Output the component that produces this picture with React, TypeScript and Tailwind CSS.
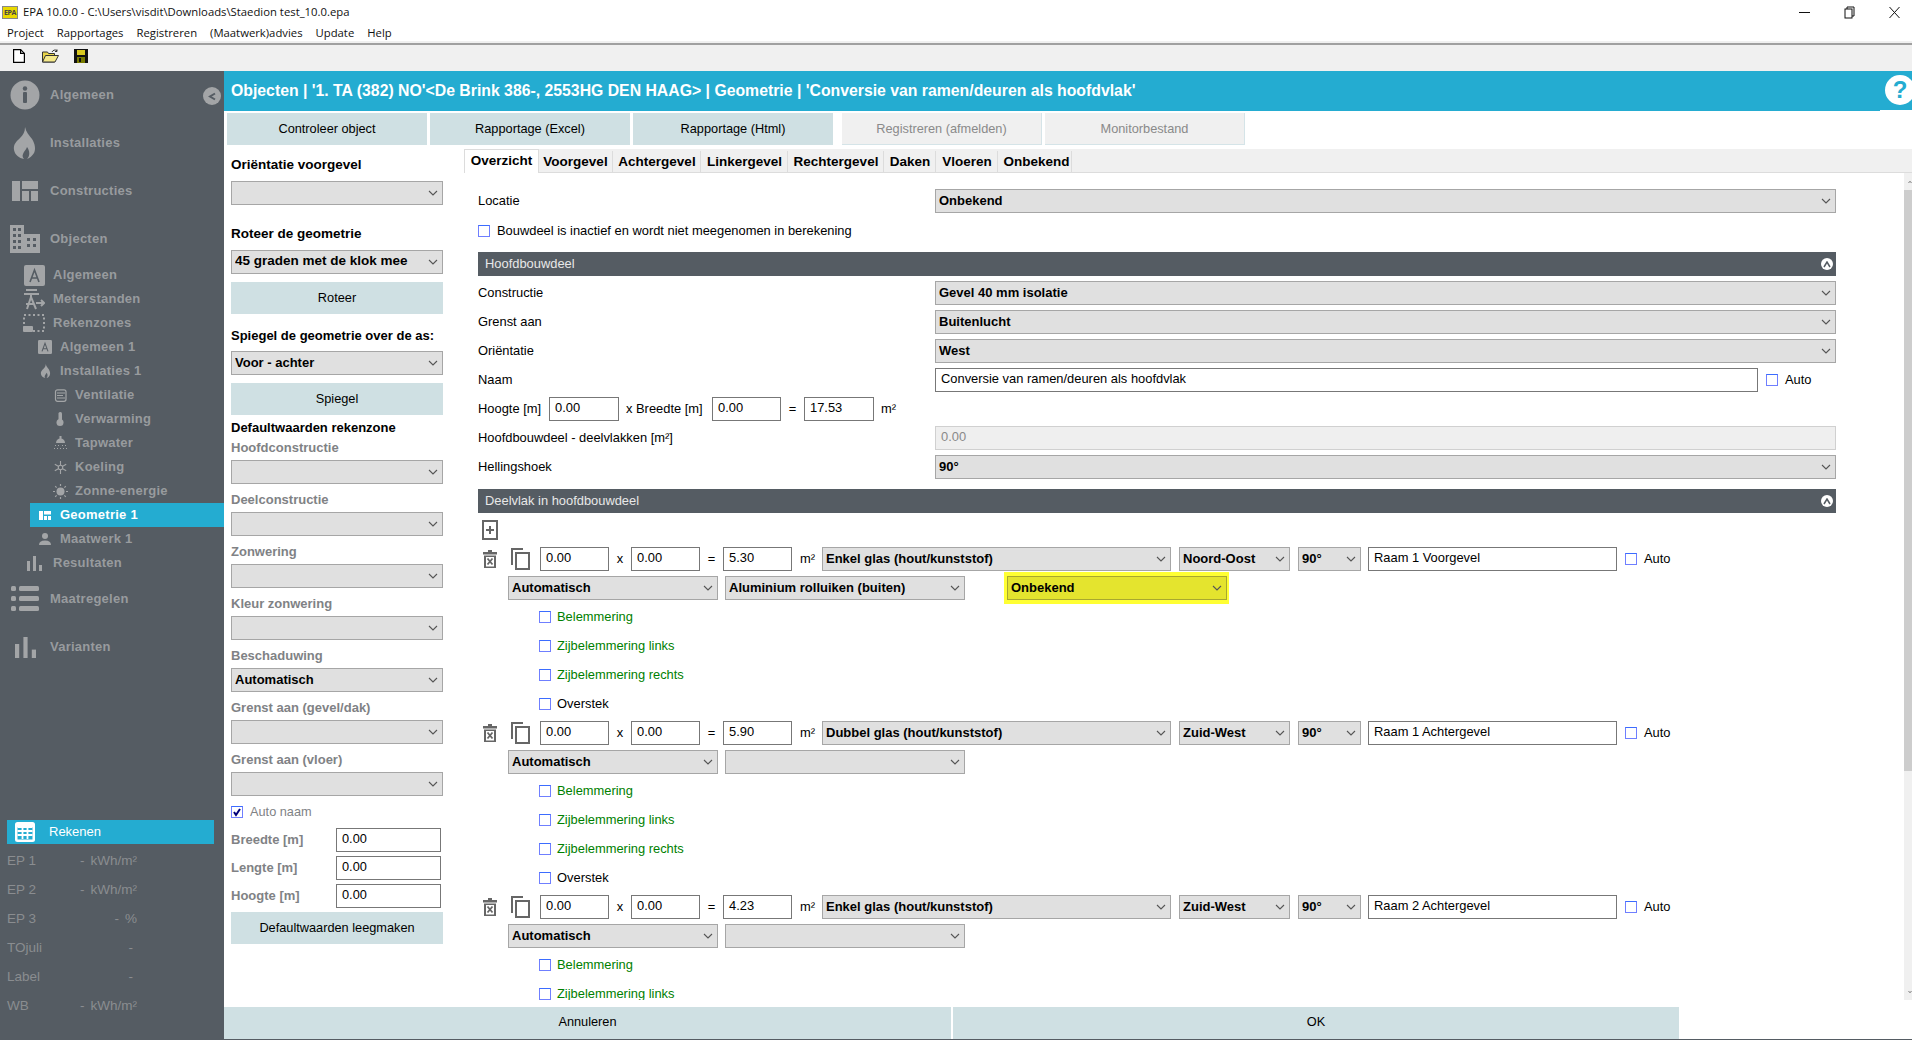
import React from "react";

const Chevron = () => (
  <svg width="10" height="6" viewBox="0 0 10 6" className="shrink-0" fill="none" stroke="#555" strokeWidth="1.1">
    <path d="M1 1l4 4 4-4" />
  </svg>
);

function Select({ className = "", text = "", bg = "bg-[#e0e0e0]", big = false }: { className?: string; text?: string; bg?: string; big?: boolean }) {
  return (
    <div className={`h-6 shrink-0 flex items-center pl-[3px] pr-[4px] border border-[#a6a6a6] ${bg} ${className}`}>
      <span className={`flex-1 truncate font-bold text-black pb-[2px] ${big ? "text-[13.5px]" : "text-[13px]"}`}>{text}</span>
      <Chevron />
    </div>
  );
}

function Input({ className = "", text = "" }: { className?: string; text?: string }) {
  return (
    <div className={`h-6 shrink-0 flex items-center pl-[5px] pb-[2px] bg-white border border-[#777] text-black ${className}`}>{text}</div>
  );
}

function Check({ checked = false }: { checked?: boolean }) {
  return (
    <span className="w-3 h-3 shrink-0 bg-white border border-[#6f7fff] border-t-[#3b6cff] flex items-center justify-center">
      {checked && (
        <svg width="10" height="10" viewBox="0 0 10 10" fill="none" stroke="#00007a" strokeWidth="2">
          <path d="M2 5l2 3 4-6" />
        </svg>
      )}
    </span>
  );
}

const TopBtn = ({ text, disabled, className = "" }: { text: string; disabled?: boolean; className?: string }) => (
  <div
    className={`w-[200px] h-8 flex items-center justify-center ${
      disabled ? "bg-[#f0f0f0] text-[#8a8a8a] border-r border-b border-[#d5e4e8] pt-[1px]" : "bg-[#cfe0e3] text-black"
    } ${className}`}
  >
    {text}
  </div>
);

const G = "#a3a5a7";
const IInfo = () => (
  <svg width="30" height="30" viewBox="0 0 30 30">
    <circle cx="15" cy="15" r="14.5" fill={G} />
    <rect x="13" y="12" width="4" height="11" rx="1" fill="#555c63" />
    <circle cx="15" cy="8.5" r="2.2" fill="#555c63" />
  </svg>
);
const IFlame = ({ s = 32 }: { s?: number }) => (
  <svg width={s * 0.72} height={s} viewBox="0 0 23 32">
    <path d="M12 0c1 5 4 8 7 12 3 5 4 10 2 14-2 3-4 5-7 6 3-3 3-8 0-12-1 3-3 4-4 7-1 2 0 4 1 5-5-1-9-4-10-9-1-6 3-9 6-12 3-3 5-6 5-11z" fill={G} />
  </svg>
);
const ILayout = () => (
  <svg width="26" height="20" viewBox="0 0 26 20" fill={G}>
    <rect x="0" y="0" width="8" height="20" />
    <rect x="10" y="0" width="16" height="8" />
    <rect x="10" y="10" width="7" height="10" />
    <rect x="19" y="10" width="7" height="10" />
  </svg>
);
const IBuilding = () => (
  <svg width="30" height="28" viewBox="0 0 30 28">
    <path fillRule="evenodd" fill={G} d="M0 0h14v9h16v19H0zM3 3v3h3V3zM8 3v3h3V3zM3 9v3h3V9zM8 9v3h3V9zM3 15v3h3v-3zM8 15v3h3v-3zM3 21v3h3v-3zM8 21v3h3v-3zM17 13v3h3v-3zM23 13v3h3v-3zM17 19v3h3v-3zM23 19v3h3v-3z" />
  </svg>
);
const IA = ({ s = 21 }: { s?: number }) => (
  <svg width={s} height={s} viewBox="0 0 21 21">
    <rect width="21" height="21" rx="2" fill={G} />
    <path d="M6 17l4.5-12 4.5 12M7.500 13h6" fill="none" stroke="#555c63" strokeWidth="1.6" />
  </svg>
);
const ITower = () => (
  <svg width="22" height="22" viewBox="0 0 22 22" fill="none" stroke={G} strokeWidth="2">
    <path d="M3 2h11M1 6h15M8 6v3M4 21l4-12 5 12M3 16h8" />
    <path d="M13 15h8M18 12l3 3-3 3" />
  </svg>
);
const IDashed = () => (
  <svg width="22" height="18" viewBox="0 0 22 18" fill="none">
    <rect x="1" y="1" width="20" height="16" stroke={G} strokeWidth="2" strokeDasharray="2 2.500" />
    <rect x="0" y="12" width="10" height="6" rx="1" fill={G} />
  </svg>
);
const IDrop = () => (
  <svg width="11" height="14" viewBox="0 0 23 32">
    <path d="M12 0c1 5 4 8 7 12 3 5 4 10 2 14-2 3-4 5-7 6 3-3 3-8 0-12-1 3-3 4-4 7-1 2 0 4 1 5-5-1-9-4-10-9-1-6 3-9 6-12 3-3 5-6 5-11z" fill={G} />
  </svg>
);
const IVent = () => (
  <svg width="13" height="13" viewBox="0 0 13 13" fill="none" stroke={G} strokeWidth="1.200">
    <rect x="1.500" y="0.800" width="10.500" height="11.500" rx="2" />
    <path d="M3 4h8M3 6.500h6M3 9h8" />
  </svg>
);
const ITherm = () => (
  <svg width="8" height="14" viewBox="0 0 8 14" fill={G}>
    <rect x="2.500" y="0" width="3.500" height="9" rx="1.500" />
    <circle cx="4" cy="10.500" r="3.500" />
  </svg>
);
const IShower = () => (
  <svg width="13" height="14" viewBox="0 0 13 14" fill={G}>
    <rect x="5.500" y="0" width="2" height="3" />
    <path d="M2 7c0-3 2-4.500 4.500-4.500S11 4 11 7z" />
    <path d="M1 9h1v1H1zM4 9h1v1H4zM8 9h1v1H8zM11 9h1v1h-1zM0 12h1v1H0zM3 12h1v1H3zM6 12h1v1H6zM9 12h1v1H9zM12 12h1v1h-1z" />
  </svg>
);
const ISnow = () => (
  <svg width="13" height="13" viewBox="0 0 13 13" fill="none" stroke={G} strokeWidth="1.100">
    <path d="M6.500 0v13M.8 3.200l11.400 6.600M.8 9.800l11.400-6.600" />
    <circle cx="6.500" cy="6.500" r="2.200" fill="#555c63" />
  </svg>
);
const ISun = () => (
  <svg width="15" height="15" viewBox="0 0 15 15" fill={G}>
    <circle cx="7.500" cy="7.500" r="4" />
    <g stroke={G} strokeWidth="1.200">
      <path d="M7.500 0v2M7.500 13v2M0 7.500h2M13 7.500h2M2.200 2.200l1.400 1.400M11.400 11.400l1.400 1.400M2.200 12.800l1.400-1.400M11.400 3.600l1.400-1.400" />
    </g>
  </svg>
);
const IPerson = () => (
  <svg width="12" height="12" viewBox="0 0 12 12" fill={G}>
    <circle cx="6" cy="3" r="3" />
    <path d="M0 12c0-3 2-4.500 6-4.500s6 1.500 6 4.500z" />
  </svg>
);
const IBars = ({ w = 15, h = 15 }: { w?: number; h?: number }) => (
  <svg width={w} height={h} viewBox="0 0 15 15" fill={G}>
    <rect x="0" y="5" width="3" height="10" />
    <rect x="6" y="0" width="3" height="15" />
    <rect x="12" y="9" width="3" height="6" />
  </svg>
);
const IList = () => (
  <svg width="28" height="26" viewBox="0 0 28 26" fill={G}>
    <rect x="0" y="0" width="5" height="5" rx="1.500" />
    <rect x="8" y="0" width="20" height="5" rx="1.500" />
    <rect x="0" y="10" width="5" height="5" rx="1.500" />
    <rect x="8" y="10" width="20" height="5" rx="1.500" />
    <rect x="0" y="20" width="5" height="5" rx="1.500" />
    <rect x="8" y="20" width="20" height="5" rx="1.500" />
  </svg>
);
const IGeo = () => (
  <svg width="12" height="9" viewBox="0 0 12 9" fill="#fff">
    <rect x="0" y="0" width="4" height="9" />
    <rect x="5" y="0" width="7" height="3.500" />
    <rect x="5" y="5" width="3" height="4" />
    <rect x="9" y="5" width="3" height="4" />
  </svg>
);

const sideText = "font-['Liberation_Sans',sans-serif] font-bold tracking-[0.25px] text-[13px] text-[#989b9e]";

const Main = ({ icon, text }: { icon: React.ReactNode; text: string }) => (
  <div className={`h-12 flex items-center ${sideText}`}>
    <span className="w-[50px] flex justify-center shrink-0">{icon}</span>
    <span className="pb-[1px]">{text}</span>
  </div>
);
const L1 = ({ icon, text }: { icon: React.ReactNode; text: string }) => (
  <div className={`h-6 flex items-center ${sideText}`}>
    <span className="w-[53px] pl-[15px] flex justify-center shrink-0">{icon}</span>
    <span className="pb-[1px]">{text}</span>
  </div>
);
const L2 = ({ icon, text }: { icon: React.ReactNode; text: string }) => (
  <div className={`h-6 flex items-center ${sideText}`}>
    <span className="w-[60px] pl-[30px] flex justify-center shrink-0">{icon}</span>
    <span className="pb-[1px]">{text}</span>
  </div>
);
const L3 = ({ icon, text }: { icon: React.ReactNode; text: string }) => (
  <div className={`h-6 flex items-center ${sideText}`}>
    <span className="w-[75px] pl-[45px] flex justify-center shrink-0">{icon}</span>
    <span className="pb-[1px]">{text}</span>
  </div>
);

const Ep = ({ label, unit }: { label: string; unit?: string }) => (
  <div className="h-[29px] pb-[1px] flex items-center justify-between w-[130px] ml-[7px] text-[#8a8d90] text-[13.5px]">
    <span>{label}</span>
    <span className={unit ? "" : "pr-[4px]"}>
      -{unit && <span className="ml-[6px]">{unit}</span>}
    </span>
  </div>
);

function Sidebar() {
  return (
    <div className="w-[224px] shrink-0 bg-[#555c63] flex flex-col relative">
      <Main icon={<IInfo />} text="Algemeen" />
      <Main icon={<IFlame />} text="Installaties" />
      <Main icon={<ILayout />} text="Constructies" />
      <Main icon={<IBuilding />} text="Objecten" />
      <L1 icon={<IA />} text="Algemeen" />
      <L1 icon={<ITower />} text="Meterstanden" />
      <L1 icon={<IDashed />} text="Rekenzones" />
      <L2 icon={<IA s={14} />} text="Algemeen 1" />
      <L2 icon={<IDrop />} text="Installaties 1" />
      <L3 icon={<IVent />} text="Ventilatie" />
      <L3 icon={<ITherm />} text="Verwarming" />
      <L3 icon={<IShower />} text="Tapwater" />
      <L3 icon={<ISnow />} text="Koeling" />
      <L3 icon={<ISun />} text="Zonne-energie" />
      <div className="h-6 ml-[30px] flex items-center bg-[#24acd1] font-['Liberation_Sans',sans-serif] font-bold tracking-[0.25px] text-[13px] text-white">
        <span className="w-[30px] flex justify-center shrink-0">
          <IGeo />
        </span>
        <span className="pb-[1px]">Geometrie 1</span>
      </div>
      <L2 icon={<IPerson />} text="Maatwerk 1" />
      <L1 icon={<IBars />} text="Resultaten" />
      <Main icon={<IList />} text="Maatregelen" />
      <Main icon={<IBars w={21} h={21} />} text="Varianten" />
      <div className="mt-[149px] ml-[7px] w-[207px] h-6 pb-[1px] bg-[#24acd1] flex items-center text-white text-[13px]">
        <span className="w-[42px] pl-[8px] pt-[1px] shrink-0">
          <svg width="20" height="20" viewBox="0 0 20 20">
            <rect x="0" y="0" width="20" height="20" rx="2.500" fill="#fff" />
            <path d="M2.500 5h15v12.500h-15z" fill="#24acd1" />
            <path d="M2.500 5h15M2.500 9h15M2.500 13h15M7.500 5v12M12.500 5v12" stroke="#fff" strokeWidth="1.800" />
          </svg>
        </span>
        Rekenen
      </div>
      <div className="mt-[3px]">
        <Ep label="EP 1" unit="kWh/m²" />
        <Ep label="EP 2" unit="kWh/m²" />
        <Ep label="EP 3" unit="%" />
        <Ep label="TOjuli" />
        <Ep label="Label" />
        <Ep label="WB" unit="kWh/m²" />
      </div>
      <span className="absolute left-[203px] top-[16px] w-[18px] h-[18px] rounded-full bg-[#a3a5a7] flex items-center justify-center">
        <svg width="9" height="9" viewBox="0 0 9 9" fill="none" stroke="#555c63" strokeWidth="2">
          <path d="M7 1.500L2 4.500l5 3" />
        </svg>
      </span>
    </div>
  );
}

const lab = "h-4 pb-[1px] flex items-center font-bold text-[#808285] text-[13px]";
const btn = "h-8 flex items-center justify-center bg-[#cfe0e3]";

const Field = ({ label, value = "" }: { label: string; value?: string }) => (
  <>
    <div className={`${lab} mt-2`}>{label}</div>
    <Select className="mt-1" text={value} />
  </>
);

const Dim = ({ label, className = "" }: { label: string; className?: string }) => (
  <div className={`flex items-center ${className}`}>
    <span className="w-[105px] pb-[1px] font-bold text-[13px] text-[#808285]">{label}</span>
    <Input className="w-[105px]" text="0.00" />
  </div>
);

function LeftPanel() {
  return (
    <div className="w-[240px] shrink-0 px-[7px] flex flex-col [&>*]:w-[212px]">
      <div className="mt-2 h-6 flex items-center font-bold text-black text-[13.5px]">Oriëntatie voorgevel</div>
      <Select className="mt-1" />
      <div className="mt-[17px] h-6 flex items-center font-bold text-black text-[13.5px]">Roteer de geometrie</div>
      <Select className="mt-1" big text="45 graden met de klok mee" />
      <div className={`mt-2 ${btn}`}>Roteer</div>
      <div className="mt-[14px] h-4 pb-[1px] flex items-center font-bold text-black text-[13px] whitespace-nowrap">Spiegel de geometrie over de as:</div>
      <Select className="mt-[7px]" text="Voor - achter" />
      <div className={`mt-2 ${btn}`}>Spiegel</div>
      <div className="mt-[5px] h-4 pb-[1px] flex items-center font-bold text-black text-[13px]">Defaultwaarden rekenzone</div>
      <div className={`${lab} mt-1`}>Hoofdconstructie</div>
      <Select className="mt-1" />
      <Field label="Deelconstructie" />
      <Field label="Zonwering" />
      <Field label="Kleur zonwering" />
      <Field label="Beschaduwing" value="Automatisch" />
      <Field label="Grenst aan (gevel/dak)" />
      <Field label="Grenst aan (vloer)" />
      <div className="mt-2 h-4 flex items-center gap-[7px] text-[#808285]">
        <Check checked />
        <span>Auto naam</span>
      </div>
      <Dim label="Breedte [m]" className="mt-2" />
      <Dim label="Lengte [m]" className="mt-1" />
      <Dim label="Hoogte [m]" className="mt-1" />
      <div className={`mt-1 ${btn}`}>Defaultwaarden leegmaken</div>
    </div>
  );
}

const Tab = ({ text, className = "" }: { text: string; className?: string }) => (
  <div className={`h-[22px] mt-[2px] pb-[1px] flex items-center justify-center font-bold text-[13.5px] text-black border-r border-[#dcdcdc] ${className}`}>{text}</div>
);

const Collapse = () => (
  <span className="w-3 h-3 rounded-full bg-white flex items-center justify-center">
    <svg width="8" height="7" viewBox="0 0 8 7" fill="none" stroke="#555c63" strokeWidth="1.500">
      <path d="M1 6l3-5 3 5" />
    </svg>
  </span>
);

const Bar = ({ text, className = "" }: { text: string; className?: string }) => (
  <div className={`h-6 bg-[#555c63] flex items-center justify-between pl-[7px] pr-[3px] text-[#e8e8e8] ${className}`}>
    <span>{text}</span>
    <Collapse />
  </div>
);

const FormRow = ({ label, children, className = "mt-[5px]" }: { label?: string; children: React.ReactNode; className?: string }) => (
  <div className={`h-6 flex items-center ${className}`}>
    <span className="w-[457px] shrink-0">{label}</span>
    {children}
  </div>
);

const Trash = () => (
  <svg width="14" height="18" viewBox="0 0 14 18">
    <rect x="5" y="0" width="4" height="2" fill="#666" />
    <rect x="0" y="2" width="14" height="2.500" fill="#666" />
    <path fillRule="evenodd" fill="#666" d="M1 5.500h12V18H1zM3 7v9.500h8V7z" />
    <path d="M4.500 8.500l5 6M9.500 8.500l-5 6" stroke="#666" strokeWidth="1.800" />
  </svg>
);
const Copy = () => (
  <svg width="19" height="22" viewBox="0 0 19 22" fill="none" stroke="#666" strokeWidth="2">
    <path d="M1 17V1h11" />
    <rect x="5" y="5" width="13" height="16" />
  </svg>
);

const CheckRow = ({ text, green = true, className = "mt-[13px]" }: { text: string; green?: boolean; className?: string }) => (
  <div className={`h-4 ml-[61px] flex items-center gap-[6px] ${green ? "text-[#008000]" : "text-black"} ${className}`}>
    <Check />
    <span>{text}</span>
  </div>
);

function DeelRow({ area, glass, orient, name, sun, yellow, clip }: { area: string; glass: string; orient: string; name: string; sun?: string; yellow?: boolean; clip?: boolean }) {
  return (
    <div className="flex flex-col">
      <div className="h-6 flex items-center">
        <span className="ml-[5px] w-[14px] shrink-0 flex">
          <Trash />
        </span>
        <span className="ml-[14px] w-[19px] shrink-0 flex">
          <Copy />
        </span>
        <Input className="ml-[10px] w-[69px]" text="0.00" />
        <span className="w-[22px] text-center">x</span>
        <Input className="w-[69px]" text="0.00" />
        <span className="w-[23px] text-center">=</span>
        <Input className="w-[69px]" text={area} />
        <span className="w-[30px] pl-[8px]">m²</span>
        <Select className="w-[349px]" text={glass} />
        <Select className="ml-2 w-[111px]" text={orient} />
        <Select className="ml-2 w-[63px]" text="90°" />
        <Input className="ml-[7px] w-[249px]" text={name} />
        <span className="ml-2 flex items-center gap-[7px]">
          <Check />
          Auto
        </span>
      </div>
      <div className="h-6 mt-[5px] flex items-center">
        <Select className="ml-[30px] w-[210px]" text="Automatisch" />
        <Select className="ml-[7px] w-[240px]" text={sun} />
        {yellow && (
          <div className="ml-[39px] -my-[5px] bg-[#ffff33] pl-[3px] pr-[2px] py-[4px] w-[225px]">
            <Select className="border-[#a8a82e]" bg="bg-[#e4e42e]" text="Onbekend" />
          </div>
        )}
      </div>
      <CheckRow text="Belemmering" className="mt-[9px]" />
      <CheckRow text="Zijbelemmering links" />
      {!clip && (
        <>
          <CheckRow text="Zijbelemmering rechts" />
          <CheckRow text="Overstek" green={false} />
        </>
      )}
    </div>
  );
}

function RightPanel() {
  return (
    <div className="flex-1 min-w-0 flex flex-col">
      <div className="mt-1 h-6 shrink-0 bg-[#f0f0f0] border-b border-[#dcdcdc] flex items-start">
        <div className="w-[75px] h-[24px] pb-[1px] bg-white border-l border-t border-r border-[#dcdcdc] flex items-center justify-center font-bold text-[13.5px] text-black">Overzicht</div>
        <Tab text="Voorgevel" className="w-[74px]" />
        <Tab text="Achtergevel" className="w-[88px] pl-[1px]" />
        <Tab text="Linkergevel" className="w-[87px] pl-[1px]" />
        <Tab text="Rechtergevel" className="w-[96px] pl-[1px]" />
        <Tab text="Daken" className="w-[52px] pl-[1px]" />
        <Tab text="Vloeren" className="w-[62px] pl-[1px]" />
        <Tab text="Onbekend" className="w-[74px] pl-[4px]" />
      </div>
      <div className="h-[827px] relative overflow-hidden pl-[14px] flex flex-col">
        <div className="w-[1358px] flex flex-col shrink-0 text-black text-[12.9px]">
          <FormRow label="Locatie" className="mt-4">
            <Select className="w-[901px]" text="Onbekend" />
          </FormRow>
          <div className="mt-[10px] h-4 flex items-center gap-[7px]">
            <Check />
            <span>Bouwdeel is inactief en wordt niet meegenomen in berekening</span>
          </div>
          <Bar text="Hoofdbouwdeel" className="mt-[13px]" />
          <FormRow label="Constructie">
            <Select className="w-[901px]" text="Gevel 40 mm isolatie" />
          </FormRow>
          <FormRow label="Grenst aan">
            <Select className="w-[901px]" text="Buitenlucht" />
          </FormRow>
          <FormRow label="Oriëntatie">
            <Select className="w-[901px]" text="West" />
          </FormRow>
          <FormRow label="Naam">
            <Input className="w-[823px]" text="Conversie van ramen/deuren als hoofdvlak" />
            <span className="ml-2 flex items-center gap-[7px]">
              <Check />
              Auto
            </span>
          </FormRow>
          <div className="mt-[5px] h-6 flex items-center">
            <span className="w-[71px]">Hoogte [m]</span>
            <Input className="w-[70px]" text="0.00" />
            <span className="w-[93px] pl-[7px]">x Breedte [m]</span>
            <Input className="w-[69px]" text="0.00" />
            <span className="w-[23px] text-center">=</span>
            <Input className="w-[70px]" text="17.53" />
            <span className="pl-[7px]">m²</span>
          </div>
          <FormRow label="Hoofdbouwdeel - deelvlakken [m²]">
            <div className="w-[901px] h-6 flex items-center pl-[5px] pb-[1px] bg-[#efefef] border border-[#d0d0d0] text-[#8a8a8a]">0.00</div>
          </FormRow>
          <FormRow label="Hellingshoek">
            <Select className="w-[901px]" text="90°" />
          </FormRow>
          <Bar text="Deelvlak in hoofdbouwdeel" className="mt-[10px]" />
          <span className="mt-[7px] ml-1 h-5 flex">
            <svg width="16" height="20" viewBox="0 0 16 20" fill="none" stroke="#666" strokeWidth="2">
              <rect x="1" y="1" width="14" height="18" />
              <path d="M4 10h8M8 6v8" />
            </svg>
          </span>
          <div className="mt-[7px] flex flex-col gap-[9px]">
            <DeelRow area="5.30" glass="Enkel glas (hout/kunststof)" orient="Noord-Oost" name="Raam 1 Voorgevel" sun="Aluminium rolluiken (buiten)" yellow />
            <DeelRow area="5.90" glass="Dubbel glas (hout/kunststof)" orient="Zuid-West" name="Raam 1 Achtergevel" />
            <DeelRow area="4.23" glass="Enkel glas (hout/kunststof)" orient="Zuid-West" name="Raam 2 Achtergevel" clip />
          </div>
        </div>
        <div className="absolute right-0 top-0 bottom-0 w-2 bg-[#f0f0f0] flex flex-col">
          <span className="h-[17px] flex items-center justify-center overflow-hidden">
            <svg width="8" height="6" viewBox="0 0 8 6" fill="none" stroke="#555" strokeWidth="1.500" className="ml-[4px]">
              <path d="M1 5l3-3.500L7 5" />
            </svg>
          </span>
          <span className="h-[581px] bg-[#cdcdcd]" />
          <span className="flex-1" />
          <span className="h-[17px] flex items-center justify-center overflow-hidden">
            <svg width="8" height="6" viewBox="0 0 8 6" fill="none" stroke="#555" strokeWidth="1.500" className="ml-[4px]">
              <path d="M1 1l3 3.500L7 1" />
            </svg>
          </span>
        </div>
      </div>
    </div>
  );
}

export default function App() {
  return (
    <div className="w-[1912px] h-[1040px] flex flex-col overflow-hidden bg-white text-black text-[12.75px] leading-none font-['Liberation_Sans',sans-serif]">
      <div className="h-6 shrink-0 flex items-center font-['Open_Sans',sans-serif] text-[11.3px]">
        <span className="ml-[2px] w-[16px] h-[13px] bg-[#e8d800] border border-[#888] flex items-center justify-center text-[7px] font-bold text-[#444] tracking-tighter">EPA</span>
        <span className="ml-[5px] text-[#111]">EPA 10.0.0 - C:\Users\visdit\Downloads\Staedion test_10.0.epa</span>
        <span className="ml-auto mr-[12px] flex items-center gap-[34px]">
          <svg width="11" height="11" viewBox="0 0 11 11" stroke="#111" fill="none">
            <path d="M0 5.500h11" />
          </svg>
          <svg width="11" height="13" viewBox="0 0 11 13" stroke="#111" fill="none">
            <path d="M3 3V1h7v9H8" />
            <rect x="1" y="3" width="7" height="9" />
          </svg>
          <svg width="11" height="13" viewBox="0 0 11 13" stroke="#111" fill="none">
            <path d="M0.500 1l10 11M10.500 1l-10 11" />
          </svg>
        </span>
      </div>
      <div className="h-[17px] shrink-0 flex items-center pl-[7px] gap-[13px] font-['Open_Sans',sans-serif] text-[11.3px] text-[#111]">
        <span>Project</span>
        <span>Rapportages</span>
        <span>Registreren</span>
        <span>(Maatwerk)advies</span>
        <span>Update</span>
        <span>Help</span>
      </div>
      <div className="h-[30px] shrink-0 bg-[#f0f0f0] border-t border-[#f0f0f0] flex flex-col">
        <div className="h-[2px] shrink-0 mt-[1px] bg-[#a0a0a0]" />
        <div className="flex items-center pl-[13px] mt-[4px]">
          <svg width="12" height="14" viewBox="0 0 12 14" fill="#fff" stroke="#000" strokeWidth="1.200">
            <path d="M.6.6h7l3.800 3.800v9H.6z" />
            <path d="M7.600.6v3.800h3.800" fill="none" />
          </svg>
          <svg width="17" height="14" viewBox="0 0 17 14" className="ml-[17px]">
            <path d="M.5 3h5l1 1.500h6V13H.5z" fill="#e8d44a" stroke="#333" />
            <path d="M.5 13l3-6.500h13L13 13z" fill="#f5e98a" stroke="#333" />
            <path d="M10 3c1-2 3-2.500 5-1.500M15 .5v2h-2" fill="none" stroke="#333" />
          </svg>
          <svg width="14" height="14" viewBox="0 0 14 14" className="ml-[15px]">
            <rect width="14" height="14" fill="#111" />
            <rect x="3" y="1" width="8" height="5" fill="#d8c820" />
            <rect x="3" y="8" width="8" height="6" fill="#777a00" />
            <rect x="5" y="9" width="2" height="4" fill="#111" />
          </svg>
        </div>
      </div>
      <div className="flex-1 min-h-0 flex">
        <Sidebar />
        <div className="flex-1 min-w-0 flex flex-col">
          <div className="h-10 shrink-0 bg-[#24acd1] flex items-center pl-[7px] text-white font-bold text-[15.8px] relative">
            Objecten | '1. TA (382) NO'&lt;De Brink 386-, 2553HG DEN HAAG&gt; | Geometrie | 'Conversie van ramen/deuren als hoofdvlak'
            <span className="absolute left-[1661px] top-[4px] w-[30px] h-[30px] rounded-full bg-white flex items-center justify-center text-[#24acd1] text-[24px]">?</span>
            <span className="absolute left-[1656px] right-0 bottom-0 h-px bg-white" />
          </div>
          <div className="mt-[2px] h-8 shrink-0 flex pl-[3px]">
            <TopBtn text="Controleer object" />
            <TopBtn text="Rapportage (Excel)" className="ml-[3px]" />
            <TopBtn text="Rapportage (Html)" className="ml-[3px]" />
            <TopBtn text="Registreren (afmelden)" disabled className="ml-[9px]" />
            <TopBtn text="Monitorbestand" disabled className="ml-[3px]" />
          </div>
          <div className="h-[862px] shrink-0 flex overflow-hidden">
            <LeftPanel />
            <RightPanel />
          </div>
          <div className="h-8 shrink-0 flex">
            <div className="w-[727px] pb-[1px] flex items-center justify-center bg-[#cfe0e3]">Annuleren</div>
            <div className="ml-[2px] w-[726px] pb-[1px] flex items-center justify-center bg-[#cfe0e3]">OK</div>
          </div>
          <div className="h-px bg-[#555c63] shrink-0" />
        </div>
      </div>
    </div>
  );
}
